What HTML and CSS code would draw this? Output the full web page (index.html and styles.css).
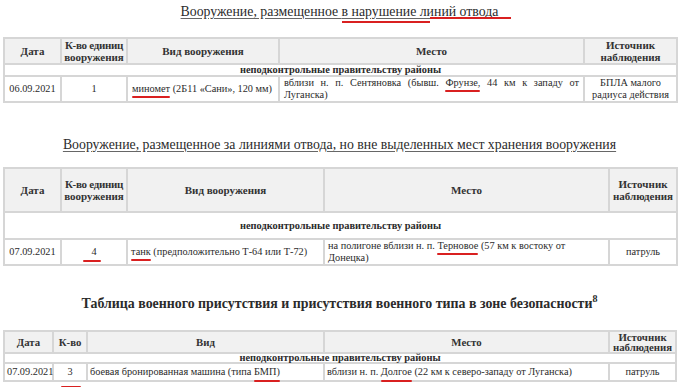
FILE: index.html
```html
<!DOCTYPE html>
<html lang="ru">
<head>
<meta charset="utf-8">
<link rel="stylesheet" href="styles.css">
</head>
<body>
<h2 class="title t1"><span class="u">Вооружение, размещенное <span class="redline">в нарушение линий отвода</span></span></h2>
<table class="tbl tb1">
  <colgroup><col style="width:57px"><col style="width:66px"><col style="width:152px"><col style="width:305px"><col style="width:93px"></colgroup>
  <tr class="head"><th>Дата</th><th><span class="nar">К-во единиц</span><br>вооружения</th><th>Вид вооружения</th><th>Место</th><th>Источник<br>наблюдения</th></tr>
  <tr class="group"><th colspan="5">неподконтрольные правительству районы</th></tr>
  <tr class="data">
    <td class="c">06.09.2021</td>
    <td class="c">1</td>
    <td><span class="mk m1">миномет</span> (2Б11 «Сани», 120 мм)</td>
    <td class="just">вблизи н. п. Сентяновка (бывш. <span class="mk m1">Фрунзе,</span> 44 км к западу от Луганска)</td>
    <td class="c">БПЛА малого радиуса действия</td>
  </tr>
</table>

<h2 class="title t2"><span class="u">Вооружение, размещенное за линиями отвода, но вне выделенных мест хранения вооружения</span></h2>
<table class="tbl tb2">
  <colgroup><col style="width:57px"><col style="width:66px"><col style="width:197px"><col style="width:285px"><col style="width:68px"></colgroup>
  <tr class="head"><th>Дата</th><th><span class="nar">К-во единиц</span><br>вооружения</th><th>Вид вооружения</th><th>Место</th><th>Источник<br>наблюдения</th></tr>
  <tr class="group"><th colspan="5">неподконтрольные правительству районы</th></tr>
  <tr class="data">
    <td class="c">07.09.2021</td>
    <td class="c"><span class="mk m2n">4</span></td>
    <td><span class="mk m2">танк</span> (предположительно Т-64 или Т-72)</td>
    <td>на полигоне вблизи н. п. <span class="mk m2">Терновое</span> (57 км к востоку от Донецка)</td>
    <td class="c">патруль</td>
  </tr>
</table>

<h2 class="title t3">Таблица военного присутствия и присутствия военного типа в зоне безопасности<sup>8</sup></h2>
<table class="tbl tb3">
  <colgroup><col style="width:49px"><col style="width:34px"><col style="width:237px"><col style="width:285px"><col style="width:67px"></colgroup>
  <tr class="head"><th>Дата</th><th>К-во</th><th>Вид</th><th>Место</th><th>Источник<br>наблюдения</th></tr>
  <tr class="group"><th colspan="5">неподконтрольные правительству районы</th></tr>
  <tr class="data">
    <td class="c">07.09.2021</td>
    <td class="c"><span class="mk m3n">3</span></td>
    <td>боевая бронированная машина (типа <span class="mk m3">БМП)</span></td>
    <td>вблизи н. п. <span class="mk m3">Долгое</span> (22 км к северо-западу от Луганска)</td>
    <td class="c">патруль</td>
  </tr>
</table>
</body>
</html>
```
FILE: styles.css
```css
html, body {
  margin: 0;
  padding: 0;
  background: #fff;
}
body {
  font-family: "Liberation Serif", "Times New Roman", serif;
  color: #2a2a2a;
  padding: 0 4px 12px 3px;
}
.title {
  margin: 0;
  text-align: center;
  font-weight: normal;
  font-size: 13.8px;
  line-height: 17px;
  color: #2b2b2b;
}
.title .u {
  text-decoration: underline;
  text-decoration-color: #666;
  text-underline-offset: 2px;
}
.t1 { padding-top: 3px; margin-bottom: 17px; }
.t2 { margin-top: 33px; margin-bottom: 14px; }
.t3 {
  font-weight: bold;
  font-size: 13.9px;
  margin-top: 29px;
  margin-bottom: 18px;
}
.t3 sup { font-size: 10px; line-height: 0; vertical-align: 6px; }

.tbl {
  width: 673px;
  table-layout: fixed;
  border-collapse: collapse;
  font-size: 10.3px;
  line-height: 12px;
  color: #2b2b2b;
}
.tbl th, .tbl td {
  border: 2px solid #d6d6d6;
  padding: 0 4px;
}
.tbl .head th {
  background: #f1f1f1;
  font-weight: bold;
  font-size: 11px;
  text-align: center;
  color: #333;
  padding: 0;
}
.nar { letter-spacing: -0.3px; white-space: nowrap; }
.tbl .group th {
  font-weight: bold;
  font-size: 10.4px;
  text-align: center;
  background: #fff;
  color: #2b2b2b;
  padding: 0;
}
.tbl td.c { text-align: center; }
.tbl td.just { text-align: justify; text-align-last: left; }

.tb1 .head th { height: 23px; }
.tb1 .group th { height: 10px; line-height: 10px; }
.tb1 .data td { height: 22px; padding: 0 4px; }

.tb2 .head th { height: 42px; }
.tb2 .group th { height: 25px; }
.tb2 .data td { height: 24px; padding: 0 3px; }

.tb3 { line-height: 10.5px; }
.tb3 .head th { height: 20px; font-size: 10.8px; line-height: 10px; }
.tb3 .group th { height: 7px; line-height: 8px; }
.tb3 .data td { height: 16px; padding: 0 2px; }

.mk { position: relative; display: inline-block; line-height: inherit; }
.mk::after {
  content: "";
  position: absolute;
  left: 0;
  right: 0;
  bottom: -3px;
  height: 2px;
  background: #d92020;
  border-radius: 1px;
}
.m2::after { bottom: -3px; }
.m2n::after { left: -8px; right: -4px; bottom: -4px; }
.m3::after { bottom: -5px; }
.m3n::after { left: -6px; right: -8px; bottom: -11px; }

.redline { position: relative; }
.redline::before {
  content: "";
  position: absolute;
  left: 0;
  width: 88px;
  bottom: -4px;
  height: 2px;
  background: #d92020;
}
.redline::after {
  content: "";
  position: absolute;
  left: 88px;
  right: -13px;
  bottom: 0;
  height: 2px;
  background: #d92020;
}
```
